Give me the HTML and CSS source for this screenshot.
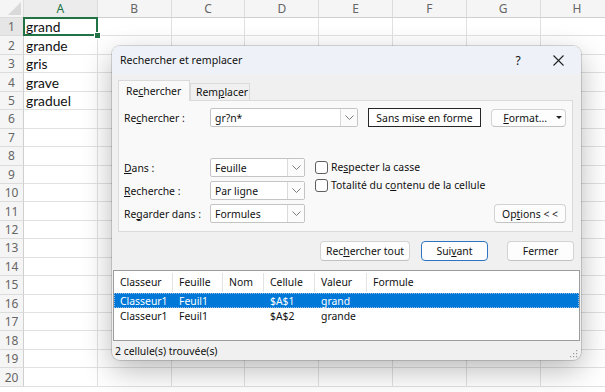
FILE: index.html
```html
<!DOCTYPE html>
<html lang="fr">
<head>
    <meta charset="UTF-8">
    <title>Rechercher et remplacer</title>
    <link rel="stylesheet" href="styles.css">
</head>
<body>
    <div id="grid" class="grid"></div>

    <div class="dialog">
        <div class="titlebar">
            <span class="title">Rechercher et remplacer</span>
            <span class="help">?</span>
            <span class="close">
                <svg width="11" height="11" viewBox="0 0 11 11"><path d="M0.5 0.5 L10.5 10.5 M10.5 0.5 L0.5 10.5" stroke="#222" stroke-width="1.1" fill="none"/></svg>
            </span>
        </div>
        <div class="dialog-body">
            <div class="tabs">
                <div class="tab active">Re<u>c</u>hercher</div>
                <div class="tab">Rem<u>p</u>lacer</div>
            </div>
            <div class="panel">
                <div class="find-row">
                    <span class="lbl">Re<u>c</u>hercher :</span>
                    <div class="combo find">
                        <span class="val">gr?n*</span>
                        <span class="arrow"><svg width="9" height="5" viewBox="0 0 9 5"><path d="M0.5 0.5 L4.5 4.5 L8.5 0.5" stroke="#7a7a7a" fill="none"/></svg></span>
                    </div>
                    <button class="btn plain">Sans mise en forme</button>
                    <button class="btn fmt"><span><u>F</u>ormat...</span><span class="caret"></span></button>
                </div>
                <div class="opts">
                    <div class="opt-grid">
                        <span class="lbl"><u>D</u>ans :</span>
                        <div class="combo">
                            <span class="val">Feuille</span>
                            <span class="arrow"><svg width="9" height="5" viewBox="0 0 9 5"><path d="M0.5 0.5 L4.5 4.5 L8.5 0.5" stroke="#7a7a7a" fill="none"/></svg></span>
                        </div>
                        <span class="lbl"><u>R</u>echerche :</span>
                        <div class="combo">
                            <span class="val">Par ligne</span>
                            <span class="arrow"><svg width="9" height="5" viewBox="0 0 9 5"><path d="M0.5 0.5 L4.5 4.5 L8.5 0.5" stroke="#7a7a7a" fill="none"/></svg></span>
                        </div>
                        <span class="lbl">Re<u>g</u>arder dans :</span>
                        <div class="combo">
                            <span class="val">Formules</span>
                            <span class="arrow"><svg width="9" height="5" viewBox="0 0 9 5"><path d="M0.5 0.5 L4.5 4.5 L8.5 0.5" stroke="#7a7a7a" fill="none"/></svg></span>
                        </div>
                    </div>
                    <div class="checks">
                        <div class="chk"><span class="box"></span>Re<u>s</u>pecter la casse</div>
                        <div class="chk"><span class="box"></span>Totalité du c<u>o</u>ntenu de la cellule</div>
                    </div>
                    <button class="btn options">Op<u>t</u>ions &lt; &lt;</button>
                </div>
            </div>
            <div class="actions">
                <button class="btn all">Rec<u>h</u>ercher tout</button>
                <button class="btn next">Sui<u>v</u>ant</button>
                <button class="btn close-btn">Fermer</button>
            </div>
        </div>
        <div class="results">
            <div class="res-row res-head">
                <span>Classeur</span><span>Feuille</span><span>Nom</span><span>Cellule</span><span>Valeur</span><span>Formule</span>
            </div>
            <div class="res-row sel">
                <span>Classeur1</span><span>Feuil1</span><span></span><span>$A$1</span><span>grand</span><span></span>
            </div>
            <div class="res-row">
                <span>Classeur1</span><span>Feuil1</span><span></span><span>$A$2</span><span>grande</span><span></span>
            </div>
        </div>
        <div class="status">
            <span>2 cellule(s) trouvée(s)</span>
            <svg class="grip" width="8" height="8" viewBox="0 0 8 8">
                <rect x="6" y="0" width="1.2" height="1.2" fill="#9a9a9a"/>
                <rect x="3" y="3" width="1.2" height="1.2" fill="#9a9a9a"/>
                <rect x="6" y="3" width="1.2" height="1.2" fill="#9a9a9a"/>
                <rect x="0" y="6" width="1.2" height="1.2" fill="#9a9a9a"/>
                <rect x="3" y="6" width="1.2" height="1.2" fill="#9a9a9a"/>
                <rect x="6" y="6" width="1.2" height="1.2" fill="#9a9a9a"/>
            </svg>
        </div>
    </div>

    <script>
        const words = ['grand', 'grande', 'gris', 'grave', 'graduel'];
        const cols = ['A', 'B', 'C', 'D', 'E', 'F', 'G', 'H'];
        const grid = document.getElementById('grid');

        function add(cls, text) {
            const el = document.createElement('div');
            el.className = cls;
            el.textContent = text || '';
            grid.appendChild(el);
            return el;
        }

        add('hdr corner');
        cols.forEach(c => add(c === 'A' ? 'hdr col on' : 'hdr col', c));

        for (let r = 1; r <= 20; r++) {
            add(r === 1 ? 'hdr row on' : 'hdr row', r);
            cols.forEach((c, i) => {
                const text = i === 0 ? (words[r - 1] || '') : '';
                add(r === 1 && i === 0 ? 'cell active' : 'cell', text);
            });
        }
    </script>
</body>
</html>
```

FILE: styles.css
```css
body {
    margin: 0;
    width: 605px;
    height: 392px;
    overflow: hidden;
    position: relative;
    background-color: #ffffff;
    font-family: "Noto Sans", "Segoe UI", sans-serif;
    font-size: 10.4px;
    color: #111111;
}

/* spreadsheet */
.grid {
    display: grid;
    grid-template-columns: 24px repeat(8, 73.8px);
    grid-template-rows: 18px;
    grid-auto-rows: 18.45px;
}
.hdr {
    background-color: #f5f5f5;
    color: #666666;
    font-family: "Noto Sans", sans-serif;
    font-size: 12px;
    display: flex;
    align-items: center;
    justify-content: center;
    box-sizing: border-box;
    border-right: 1px solid #dcdcdc;
    border-bottom: 1px solid #dcdcdc;
}
.hdr.col {
    border-bottom-color: #cfcfcf;
}
.hdr.row {
    border-right-color: #cfcfcf;
}
.hdr.col.on {
    color: #217346;
    background-color: #ececec;
}
.hdr.row.on {
    background-color: #e6e6e6;
}
.corner {
    position: relative;
}
.corner::after {
    content: "";
    position: absolute;
    right: 2px;
    bottom: 2px;
    border-left: 13px solid transparent;
    border-bottom: 13px solid #d9d9d9;
}
.cell {
    box-sizing: border-box;
    border-right: 1px solid #e1e1e1;
    border-bottom: 1px solid #e1e1e1;
    font-family: Lato, sans-serif;
    font-size: 13.8px;
    color: #111111;
    padding-left: 2px;
    display: flex;
    align-items: center;
    white-space: nowrap;
}
.cell.active {
    position: relative;
}
.cell.active::before {
    content: "";
    position: absolute;
    left: -1px;
    top: -1px;
    right: -1px;
    bottom: -1px;
    border: 2px solid #217346;
}
.cell.active::after {
    content: "";
    position: absolute;
    right: -4px;
    bottom: -4px;
    width: 5px;
    height: 5px;
    background-color: #217346;
    border: 1px solid #ffffff;
}

/* dialog */
.dialog {
    position: absolute;
    left: 112px;
    top: 46px;
    width: 469px;
    height: 314px;
    background-color: #f0f0f0;
    border-radius: 8px;
    overflow: hidden;
    box-shadow: 0 0 0 1px rgba(0,0,0,0.14), 0 10px 30px rgba(0,0,0,0.28);
}
.titlebar {
    height: 28px;
    display: flex;
    align-items: center;
    padding: 0 13px 0 8px;
    background-color: #eef2f8;
    font-size: 10.6px;
}
.help {
    margin-left: auto;
    width: 20px;
    text-align: center;
    font-size: 12px;
}
.close {
    margin-left: 20px;
    width: 20px;
    display: flex;
    justify-content: center;
}
.dialog-body {
    padding: 6px 8px 0 6px;
}
.tabs {
    display: flex;
    align-items: flex-end;
    height: 20px;
}
.tab {
    box-sizing: border-box;
    height: 17px;
    width: 60px;
    border: 1px solid #dadada;
    border-bottom: none;
    background-color: #f0f0f0;
    display: flex;
    align-items: center;
    padding-left: 5px;
}
.tab.active {
    width: 72px;
    height: 21px;
    margin-bottom: -1px;
    background-color: #f9f9f9;
    position: relative;
    z-index: 1;
    padding-left: 7px;
}
.panel {
    box-sizing: border-box;
    height: 132px;
    border: 1px solid #dadada;
    background-color: #f9f9f9;
    padding: 7px 6px 0 5px;
}
.find-row {
    display: flex;
    align-items: center;
    height: 19px;
}
.lbl {
    width: 86px;
    flex-shrink: 0;
}
.combo {
    box-sizing: border-box;
    height: 19px;
    width: 95px;
    display: flex;
    background-color: #ffffff;
    border: 1px solid #c4c4c4;
    border-radius: 2px;
}
.combo.find {
    width: 148px;
}
.combo .val {
    flex: 1;
    padding-left: 4px;
    display: flex;
    align-items: center;
}
.combo .arrow {
    width: 16px;
    border-left: 1px solid #dadada;
    background-color: #fbfbfb;
    display: flex;
    align-items: center;
    justify-content: center;
}
.btn {
    box-sizing: border-box;
    font-family: inherit;
    font-size: inherit;
    color: #111111;
    background-color: #fdfdfd;
    border: 1px solid #d3d3d3;
    border-bottom-color: #c2c2c2;
    border-radius: 4px;
    padding: 0;
    height: 20px;
}
.btn.plain {
    margin-left: 10px;
    width: 113px;
    height: 19px;
    border: 1px solid #262626;
    border-radius: 0;
    background-color: #ffffff;
}
.btn.fmt {
    margin-left: 10px;
    width: 75px;
    height: 18px;
    display: flex;
    align-items: center;
    justify-content: flex-end;
    padding-right: 3px;
}
.caret {
    margin-left: 9px;
    border-left: 3px solid transparent;
    border-right: 3px solid transparent;
    border-top: 3px solid #222222;
}
.opts {
    margin-top: 31px;
    display: flex;
}
.opt-grid {
    display: grid;
    grid-template-columns: 86px 95px;
    grid-auto-rows: 19px;
    row-gap: 4px;
    align-items: center;
}
.checks {
    margin-left: 10px;
    display: flex;
    flex-direction: column;
}
.chk {
    height: 18px;
    display: flex;
    align-items: center;
}
.box {
    box-sizing: border-box;
    width: 13px;
    height: 13px;
    border: 1px solid #5e5e5e;
    border-radius: 3px;
    background-color: #ffffff;
    margin-right: 3px;
}
.btn.options {
    margin-left: auto;
    align-self: flex-end;
    width: 72px;
    height: 19px;
}
.actions {
    margin-top: 9px;
    margin-right: -1px;
    display: flex;
    justify-content: flex-end;
}
.btn.all {
    width: 90px;
}
.btn.next {
    margin-left: 11px;
    width: 67px;
    border: 1px solid #2f74c2;
}
.btn.close-btn {
    margin-left: 19px;
    width: 67px;
}

/* results */
.results {
    box-sizing: border-box;
    margin: 9px 1px 0 1px;
    height: 71px;
    border: 1px solid #9c9c9c;
    background-color: #ffffff;
}
.res-row {
    display: grid;
    grid-template-columns: 59px 50px 41px 51px 52px 1fr;
    height: 15px;
    align-items: center;
}
.res-row span {
    padding-left: 6px;
    white-space: nowrap;
}
.res-head {
    height: 22px;
}
.res-head span {
    height: 19px;
    display: flex;
    align-items: center;
    border-right: 1px solid #e3e3e3;
}
.res-head span:last-child {
    border-right: none;
}
.res-row.sel {
    background-color: #0078d7;
    color: #ffffff;
    outline: 1px dotted #8fbbe6;
    outline-offset: -1px;
}
.status {
    height: 19px;
    display: flex;
    align-items: center;
    justify-content: space-between;
    padding: 0 3px 0 3px;
}
.grip {
    margin-top: 6px;
}
```
